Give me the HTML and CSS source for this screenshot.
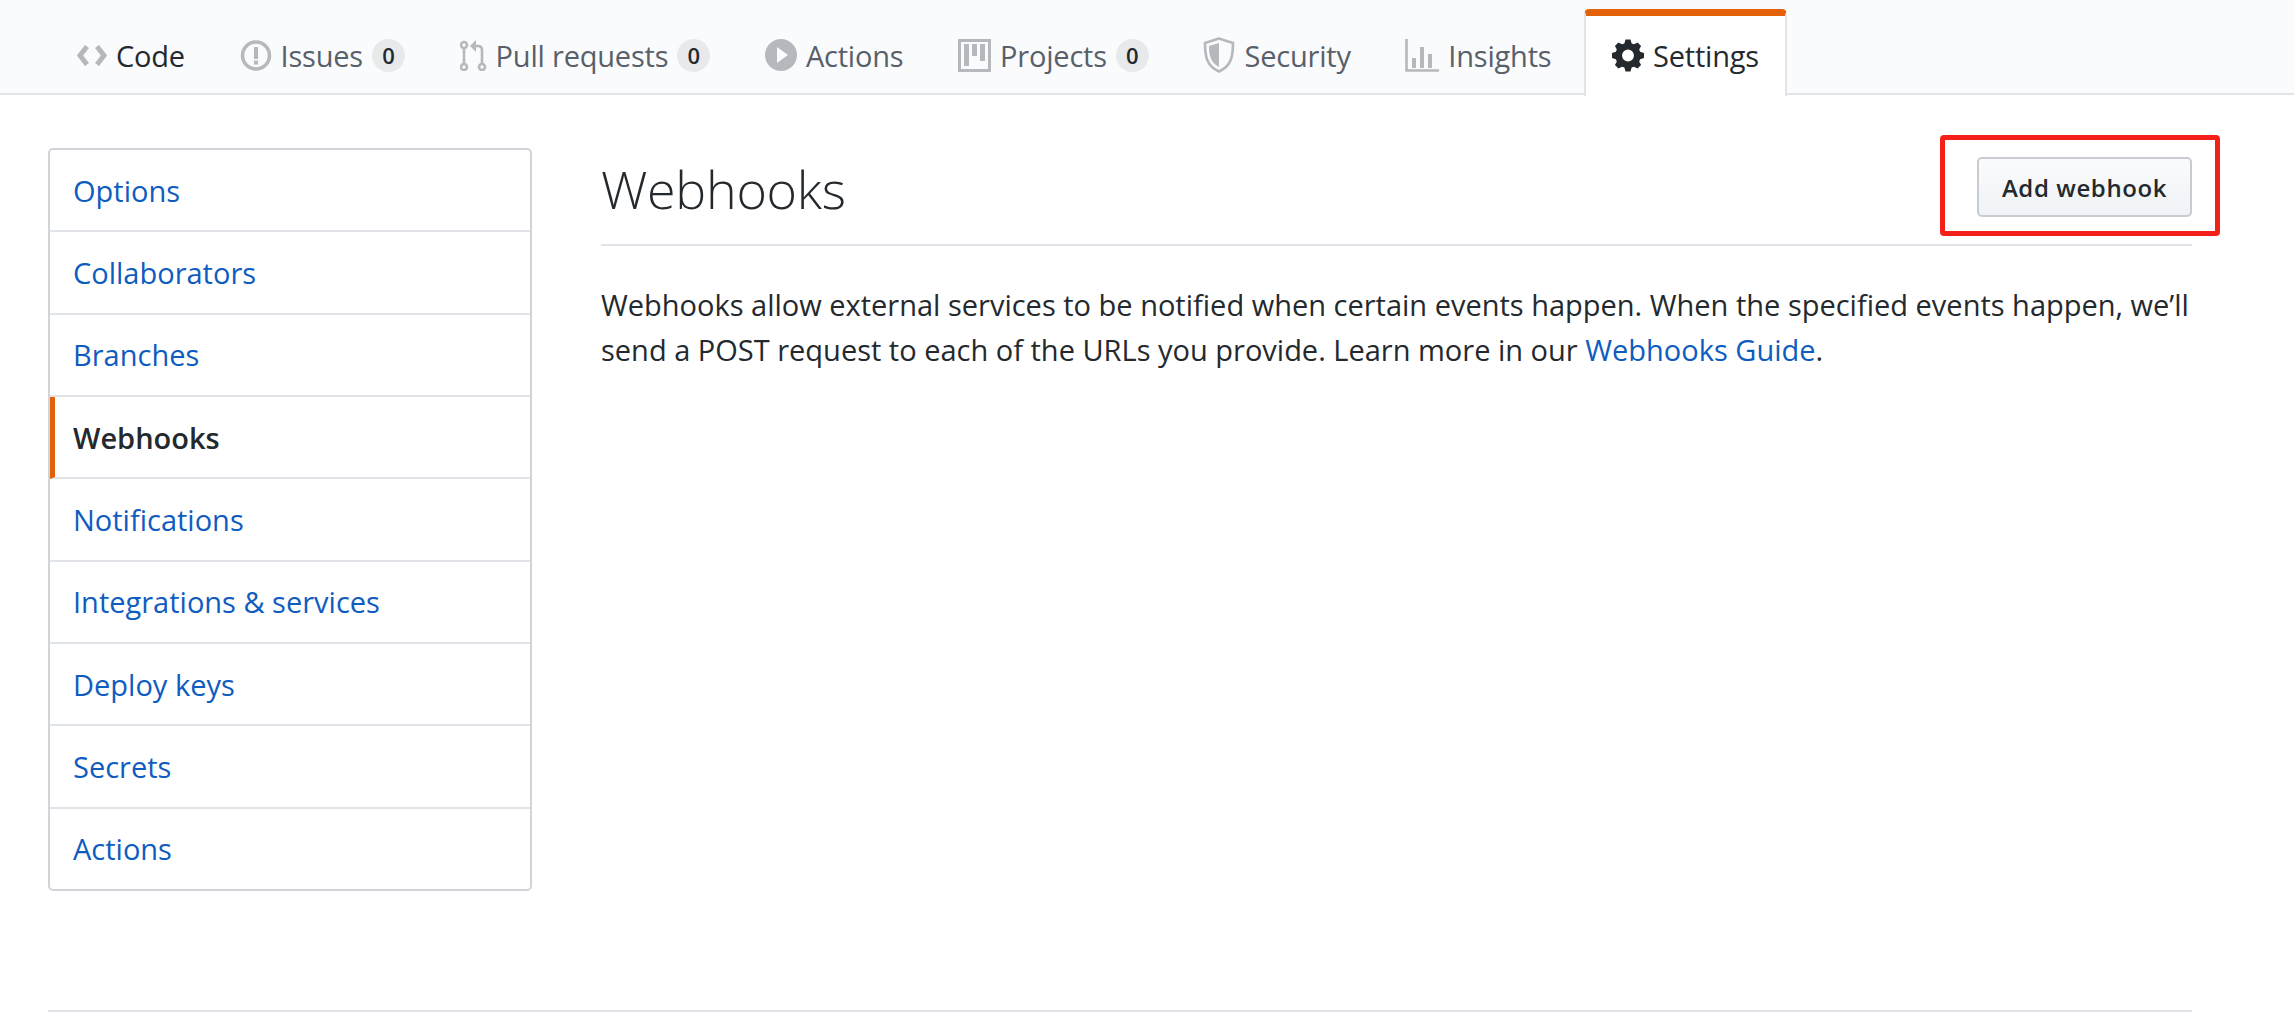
FILE: index.html
```html
<!DOCTYPE html>
<html lang="en">
<head>
<meta charset="utf-8">
<title>Webhooks</title>
<link rel="stylesheet" href="styles.css">
</head>
<body>
<nav class="tabbar">
  <a class="tab"><svg class="ic" width="30" height="21" viewBox="0 0 30 21"><path d="M10 1.500 3 10.500l7 9M20 1.500l7 9-7 9" fill="none" stroke="#b5b8bc" stroke-width="5"/></svg><span>Code</span></a>
  <a class="tab"><svg class="ic" width="32" height="31" viewBox="0 0 32 31"><circle cx="16" cy="15.500" r="13.500" fill="none" stroke="#b5b8bc" stroke-width="3.500"/><rect x="14" y="7" width="4" height="12" fill="#b5b8bc"/><rect x="14" y="20.500" width="4" height="4" fill="#b5b8bc"/></svg><span>Issues</span><b class="count">0</b></a>
  <a class="tab"><svg class="ic" width="27" height="31" viewBox="0 0 27 31"><g fill="none" stroke="#b5b8bc" stroke-width="2.6"><circle cx="4" cy="5" r="3"/><circle cx="4" cy="27" r="3"/><circle cx="22" cy="27" r="3"/><path d="M4 8v16M22 24V10q0-4-4-4h-3"/></g><path d="M16 0v12l-6-6z" fill="#b5b8bc"/></svg><span>Pull requests</span><b class="count">0</b></a>
  <a class="tab"><svg class="ic" width="32" height="32" viewBox="0 0 32 32"><circle cx="16" cy="16" r="16" fill="#b5b8bc"/><path d="M12 8l11 8-11 8z" fill="#fafbfc"/></svg><span>Actions</span></a>
  <a class="tab"><svg class="ic" width="33" height="33" viewBox="0 0 33 33"><rect x="1.5" y="1.5" width="30" height="30" fill="none" stroke="#b5b8bc" stroke-width="3"/><path d="M6 5h5v22H6zM14 5h5v12h-5zM22 5h5v17h-5z" fill="#b5b8bc"/></svg><span>Projects</span><b class="count">0</b></a>
  <a class="tab"><svg class="ic" width="32" height="36" viewBox="0 0 32 36"><path d="M16 1.5 2 6c0 14 2 23 14 28.500C28 29 30 20 30 6z" fill="none" stroke="#b5b8bc" stroke-width="2.600"/><path d="M16 6 6 9c0 10 2 17 10 21z" fill="#b5b8bc"/></svg><span>Security</span></a>
  <a class="tab"><svg class="ic" width="34" height="33" viewBox="0 0 34 33"><path d="M1.500 0v31.500H34" fill="none" stroke="#b5b8bc" stroke-width="2.600"/><path d="M7 19h4v10H7zM15 8h4v21h-4zM23 15h4v14h-4z" fill="#b5b8bc"/></svg><span>Insights</span></a>
  <a class="tab tab-selected"><svg class="ic" width="32" height="33" viewBox="0 0 14 14"><path fill-rule="evenodd" d="M14 8.100V5.900l-1.700-.5-.4-1 .8-1.600-1.500-1.500-1.600.8-1-.4L8.100 0H5.900l-.5 1.700-1 .4-1.600-.8-1.500 1.500.8 1.600-.4 1-1.700.5v2.200l1.700.5.4 1-.8 1.600 1.500 1.500 1.600-.8 1 .4.5 1.700h2.200l.5-1.700 1-.4 1.600.8 1.500-1.500-.8-1.600.4-1zM7 9.600A2.600 2.600 0 1 1 7 4.400a2.600 2.600 0 0 1 0 5.200z" fill="#24292e"/></svg><span>Settings</span></a>
</nav>
<div class="layout">
  <aside class="menu">
    <a class="menu-item">Options</a>
    <a class="menu-item">Collaborators</a>
    <a class="menu-item">Branches</a>
    <a class="menu-item menu-selected">Webhooks</a>
    <a class="menu-item">Notifications</a>
    <a class="menu-item">Integrations &amp; services</a>
    <a class="menu-item">Deploy keys</a>
    <a class="menu-item">Secrets</a>
    <a class="menu-item">Actions</a>
  </aside>
  <main class="content">
    <header class="subhead">
      <h2 class="heading">Webhooks</h2>
      <a class="btn">Add webhook</a>
      <div class="annotation"></div>
    </header>
    <p class="desc">Webhooks allow external services to be notified when certain events happen. When the specified events happen, we’ll<br>send a POST request to each of the URLs you provide. Learn more in our <a class="link">Webhooks Guide</a>.</p>
  </main>
</div>
<footer class="footer"></footer>
</body>
</html>
```
FILE: styles.css
```css
* { box-sizing: border-box; }
html, body { margin: 0; height: 100%; }
body {
  background: #fff;
  color: #24292e;
  font-family: "Open Sans", "Noto Sans", sans-serif;
  font-size: 29px;
  overflow: hidden;
}
.tabbar {
  display: flex;
  height: 95px;
  padding: 9px 0 0 51px;
  background: #fafbfc;
  border-bottom: 2px solid #e1e4e8;
}
.tab {
  display: flex;
  align-items: center;
  gap: 9px;
  height: 86px;
  padding: 6px 28.6px 0 26px;
  color: #586069;
  font-size: 29px;
  letter-spacing: -0.2px;
  white-space: nowrap;
}
.tab:first-child { color: #24292e; }
.tab-selected {
  height: 87px;
  margin-left: 4px;
  padding: 0 26px 1px;
  background: #fff;
  color: #24292e;
  border: 2px solid #e1e4e8;
  border-top: 7px solid #e36209;
  border-bottom: 0;
  border-radius: 5px 5px 0 0;
}
.ic { flex: none; }
.count {
  display: block;
  width: 33px;
  height: 33px;
  border-radius: 17px;
  background: #e7e9eb;
  color: #24292e;
  font-size: 22px;
  font-weight: 600;
  line-height: 33px;
  text-align: center;
  letter-spacing: 0;
}
.layout {
  display: flex;
  align-items: flex-start;
  padding: 53px 102px 0 48px;
  gap: 69px;
}
.menu {
  flex: none;
  width: 484px;
  height: 743px;
  border: 2px solid #d1d5da;
  border-radius: 5px;
  display: flex;
  flex-direction: column;
}
.menu-item {
  flex: 1;
  display: flex;
  align-items: center;
  padding-left: 23px;
  color: #0f5cc0;
  border-bottom: 2px solid #e1e4e8;
}
.menu-item:last-child { border-bottom: 0; }
.menu-selected {
  color: #24292e;
  font-weight: 600;
  border-left: 5px solid #e36209;
  padding-left: 18px;
}
.content { flex: 1; min-width: 0; }
.subhead {
  position: relative;
  display: flex;
  justify-content: space-between;
  align-items: flex-start;
  height: 98px;
  border-bottom: 2px solid #e1e4e8;
}
.heading {
  margin: 6px 0 0;
  font-size: 52px;
  font-weight: 300;
  line-height: 70px;
  letter-spacing: -0.3px;
}
.btn {
  width: 215px;
  height: 60px;
  margin-top: 9px;
  display: flex;
  align-items: center;
  justify-content: center;
  border: 2px solid #c8ccd0;
  border-radius: 5px;
  background: linear-gradient(#fafbfc, #eff3f6);
  font-size: 24px;
  font-weight: 600;
  letter-spacing: 0.6px;
}
.annotation {
  position: absolute;
  right: -28px;
  top: -13px;
  width: 280px;
  height: 101px;
  border: 5px solid #f5201a;
  border-radius: 4px;
}
.desc {
  margin: 36px 0 0;
  font-size: 29px;
  line-height: 45px;
  white-space: nowrap;
}
.link { color: #0f5cc0; }
.footer {
  margin: 119px 102px 0 48px;
  border-top: 2px solid #e1e4e8;
}
```
